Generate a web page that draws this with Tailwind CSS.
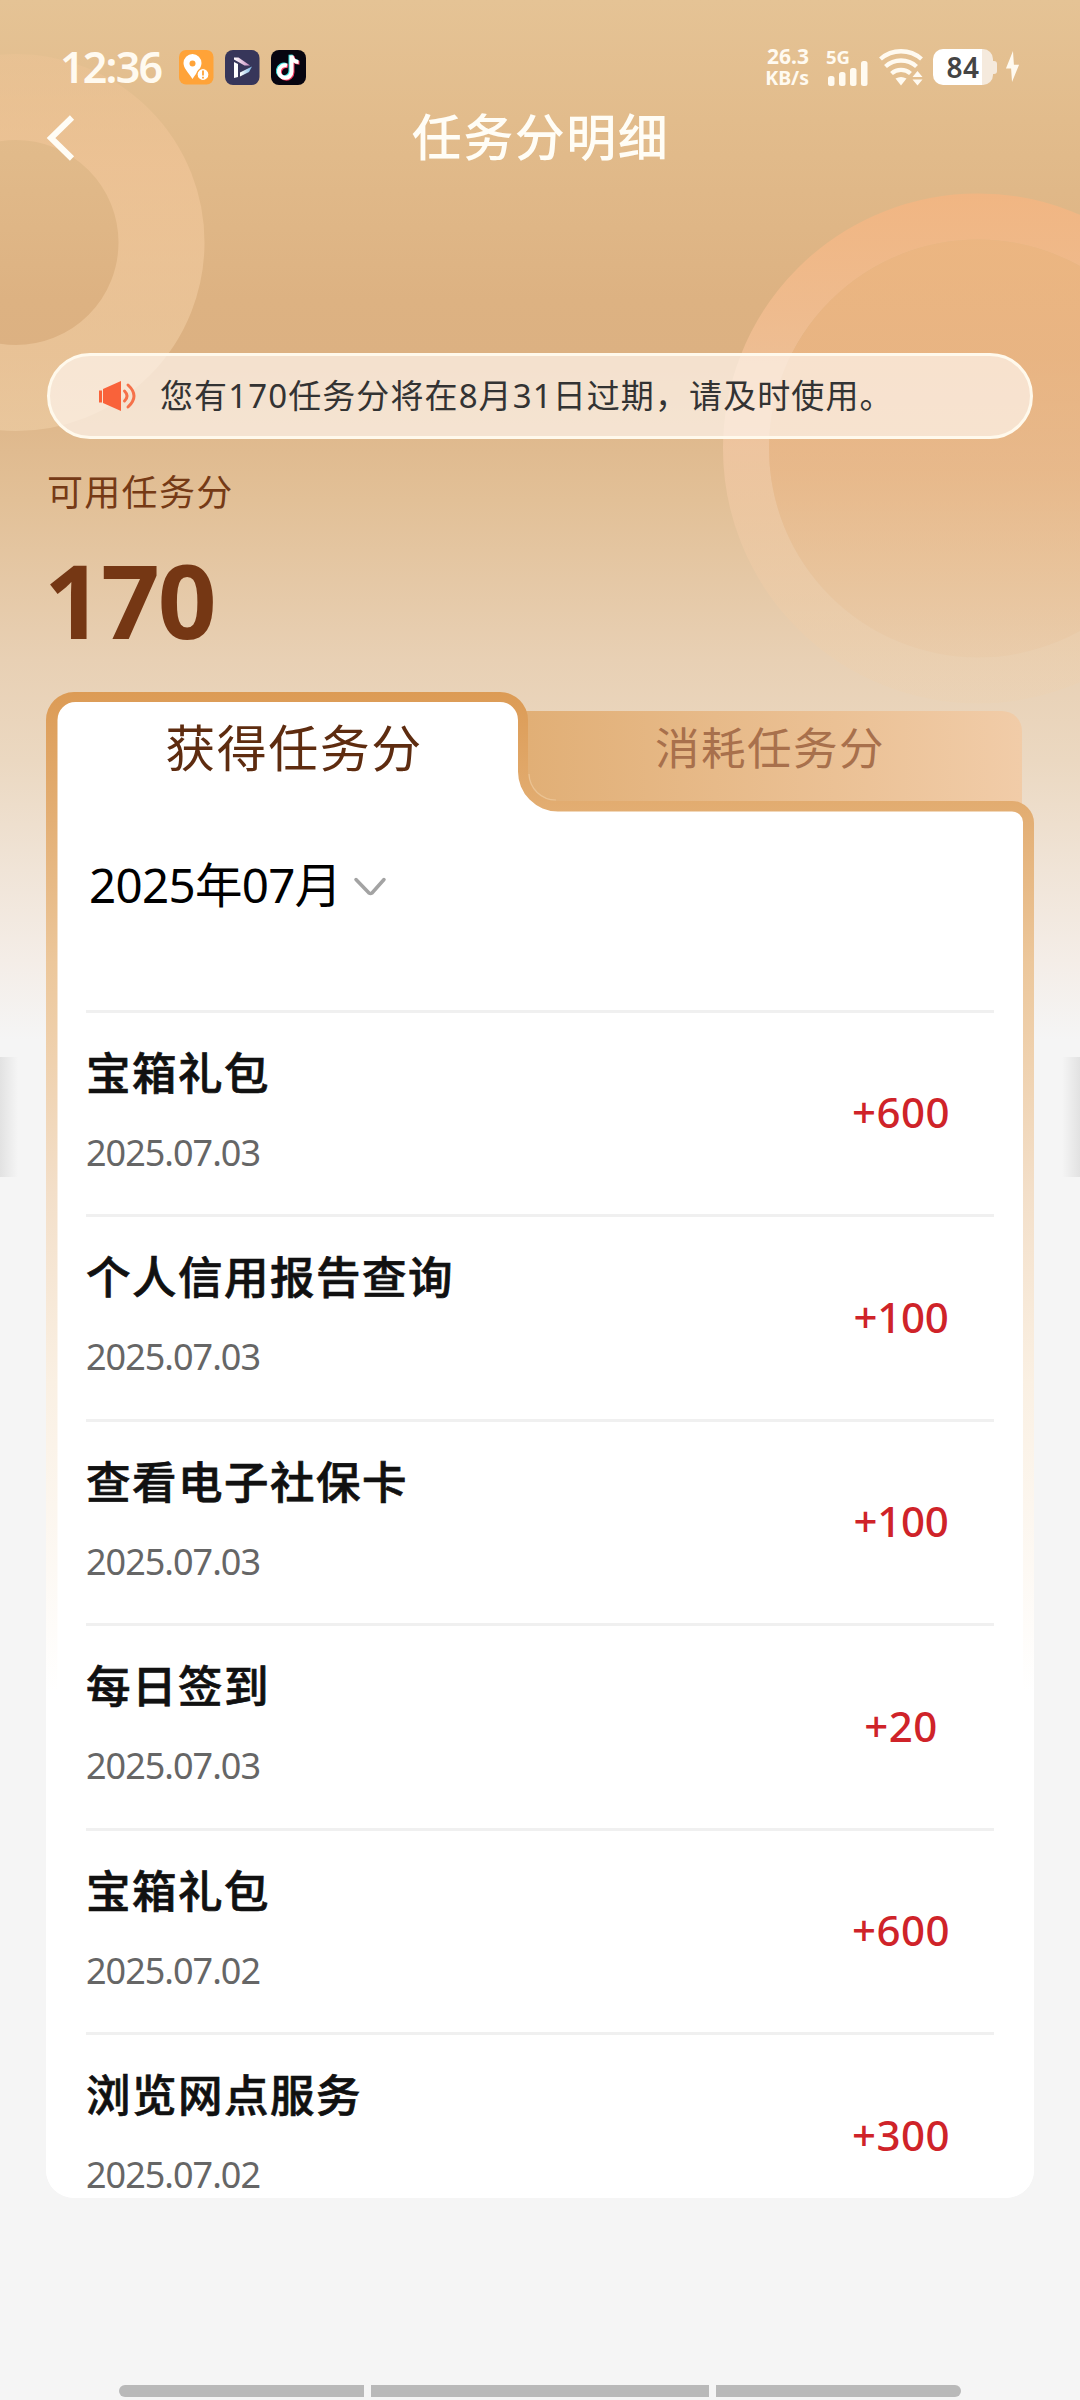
<!DOCTYPE html>
<html lang="zh-CN">
<head>
<meta charset="utf-8">
<title>任务分明细</title>
<script src="https://cdn.jsdelivr.net/npm/@tailwindcss/browser@4"></script>
</head>
<body class="bg-[#f5f5f5]">
<div class="relative flex h-[2400px] w-[1080px] flex-col overflow-hidden bg-[#f5f5f5] font-['Noto_Sans','Noto_Sans_CJK_SC',sans-serif]">

  <!-- header backdrop -->
  <div class="absolute inset-x-0 top-0 h-[1050px] bg-[linear-gradient(180deg,#e5c395_0px,#e2bc8c_120px,#ddb282_300px,#dcb182_355px,#e2c097_500px,#e8d0b4_660px,#ebd8c1_760px,#f0e4d7_870px,#f4ede7_960px,#f5f5f5_1040px)]"></div>
  <svg class="absolute left-0 top-0" width="1080" height="760" viewBox="0 0 1080 760" fill="none">
    <defs>
      <linearGradient id="ring" x1="0" y1="193" x2="0" y2="703" gradientUnits="userSpaceOnUse"><stop offset="0" stop-color="#f5b581" stop-opacity=".8"/><stop offset=".5" stop-color="#f2c8a4" stop-opacity=".75"/><stop offset="1" stop-color="#efd0aa" stop-opacity=".2"/></linearGradient>
      <linearGradient id="disc" x1="0" y1="240" x2="0" y2="658" gradientUnits="userSpaceOnUse"><stop offset="0" stop-color="#f0b680" stop-opacity=".75"/><stop offset=".55" stop-color="#ecb686" stop-opacity=".62"/><stop offset="1" stop-color="#edc59a" stop-opacity=".32"/></linearGradient>
      <linearGradient id="ringL" x1="0" y1="54" x2="0" y2="431" gradientUnits="userSpaceOnUse"><stop offset="0" stop-color="#f0c598" stop-opacity=".35"/><stop offset=".3" stop-color="#f0c598" stop-opacity=".72"/><stop offset="1" stop-color="#efcfa6" stop-opacity=".6"/></linearGradient>
    </defs>
    <circle cx="16" cy="242.500" r="145.500" stroke="url(#ringL)" stroke-width="86"/>
    <circle cx="978" cy="448.500" r="232" stroke="url(#ring)" stroke-width="46"/>
    <circle cx="978" cy="448.500" r="209" fill="url(#disc)"/>
  </svg>
  <div class="absolute left-0 top-[1057px] h-[120px] w-[18px] bg-linear-to-r from-[#e2e2e2] to-[#f5f5f5]"></div>
  <div class="absolute right-0 top-[1057px] h-[120px] w-[18px] bg-linear-to-l from-[#e2e2e2] to-[#f5f5f5]"></div>

  <!-- status bar -->
  <div class="relative flex h-[100px] items-center pl-[60px] pr-[60px] pt-[34px] text-[#fffaf0]">
    <span class="w-[119px] pb-px text-[43px] font-semibold leading-none tracking-[-1.800px]">12:36</span>
    <svg width="35" height="35" viewBox="0 0 35 35"><rect width="34.500" height="34.500" rx="7" fill="#ffa338"/><path d="M13.500 29C9 22 4.500 18 4.500 13a9 9 0 0 1 18 0c0 5-4.500 9-9 16z" fill="#fff"/><circle cx="13.500" cy="13.500" r="3" fill="#ffa338"/><circle cx="24" cy="24.500" r="6" fill="#fff" stroke="#ffa338" stroke-width="1.200"/><path d="M24 20.500v5M24 26.800v1.600" stroke="#ffa338" stroke-width="1.800"/></svg>
    <svg class="ml-[11px]" width="35" height="35" viewBox="0 0 35 35"><defs><linearGradient id="pk" x1="0" x2="1"><stop stop-color="#fff"/><stop offset="1" stop-color="#c98bc0"/></linearGradient><linearGradient id="bl" x1="0" x2="1"><stop stop-color="#fff"/><stop offset="1" stop-color="#7db9e6"/></linearGradient></defs><rect width="34.500" height="35" rx="8" fill="#37365a"/><path d="M9 12l4 2v13l-4 1z" fill="#fff"/><path d="M9 7.500h4.500L25 15.500h-5.500L9 9.500z" fill="url(#pk)"/><path d="M27 16.500l-12 6v4l9-4.500z" fill="url(#bl)"/></svg>
    <svg class="ml-[11px]" width="35" height="35" viewBox="0 0 35 35"><rect width="35" height="35" rx="8" fill="#070510"/><g fill="none" stroke-width="4"><path d="M16 15.500a6.300 6.300 0 1 0 4.500 6V5.500c.5 4 3.500 6.500 7 6.500" transform="translate(-1 -.7)" stroke="#35e0de"/><path d="M16 15.500a6.300 6.300 0 1 0 4.500 6V5.500c.5 4 3.500 6.500 7 6.500" transform="translate(1 .8)" stroke="#f5385f"/><path d="M16 15.500a6.300 6.300 0 1 0 4.500 6V5.500c.5 4 3.500 6.500 7 6.500" stroke="#fff"/></g></svg>

    <div class="ml-auto flex items-center">
      <div class="flex w-[49px] flex-col items-end text-[21px] font-bold leading-[22px]"><span>26.3</span><span class="text-[19.500px]">KB/s</span></div>
      <div class="relative ml-[15px] h-[38px] w-[45px]">
        <span class="absolute left-[2px] top-0 text-[18.500px] font-bold leading-none">5G</span>
        <svg class="absolute left-0 top-0" width="45" height="38" viewBox="0 0 45 38" fill="currentColor"><rect x="4" y="28" width="6.500" height="10" rx="2.500"/><rect x="15" y="24" width="6.500" height="14" rx="2.500"/><rect x="26" y="20" width="6.500" height="18" rx="2.500"/><rect x="37" y="13" width="6.500" height="25" rx="2.500"/></svg>
      </div>
      <svg class="ml-[10px]" width="45" height="38" viewBox="0 0 45 38" fill="none" stroke="currentColor"><path d="M1.500 11a31 31 0 0 1 41 0M6.500 18.500a23 23 0 0 1 31 0M12.500 25.500a14.500 14.500 0 0 1 19 0" stroke-width="4.300"/><path d="M16.500 30.500q5.500-3 11 0L22 37.500z" fill="currentColor" stroke="none"/><path d="M33.500 29l5-6 5 6zM33.500 31.500l5 6 5-6z" fill="currentColor" stroke="none"/></svg>
      <div class="ml-[9px] flex items-center">
        <div class="flex h-[36px] w-[60px] items-center justify-center rounded-[10px] bg-[linear-gradient(90deg,#fff_49px,#f5eadd_49px)] text-[28px] font-semibold leading-none tracking-[0.500px] text-[#444]">84</div>
        <div class="h-[13px] w-[4px] rounded-r-[3px] bg-[#f5eadd]"></div>
      </div>
      <svg class="ml-[8px]" width="15" height="36" viewBox="0 0 16 36" fill="currentColor"><path d="M8.500 1L1 19.500h5.500L7.500 34 15 15.500H9.500z"/></svg>
    </div>
  </div>

  <!-- navigation -->
  <div class="relative flex h-[76px] items-center justify-center text-[#fffdf6]">
    <svg class="absolute left-[46px] top-[14px]" width="30" height="48" viewBox="0 0 30 48" fill="none" stroke="currentColor" stroke-width="6"><path d="M26 3.500L5 24l21 20.500"/></svg>
    <h1 class="pb-[3px] pl-px text-[50px] font-medium leading-none tracking-[1.500px]">任务分明细</h1>
  </div>

  <!-- notice -->
  <div class="relative mt-[177px] ml-[47px] flex h-[86px] w-[986px] shrink-0 items-center rounded-full border-[3px] border-[#fff9ec] bg-[#fdf5ee]/70 pl-[49px]">
    <svg width="38" height="32" viewBox="0 0 38 32"><path d="M0 10.500h3v12H0zM4 9L22 1v30L4 23z" fill="#f9623a"/><path d="M25.500 11q5 5 0 10M29 5q12 11 0 22" fill="none" stroke="#f5714a" stroke-width="3" stroke-linecap="round"/></svg>
    <span class="ml-[23px] whitespace-nowrap pb-px text-[33px] leading-none tracking-[1.100px] text-[#333]">您有170任务分将在8月31日过期，请及时使用。</span>
  </div>

  <!-- balance -->
  <div class="relative mt-[29px] flex h-[50px] shrink-0 items-center pl-[47px] text-[36px] leading-none tracking-[1.300px] text-[#753a16]">可用任务分</div>
  <div class="relative mt-[31px] flex h-[100px] shrink-0 items-center pl-[44px] text-[103px] font-bold leading-none tracking-[-2px] text-[#753714]">170</div>

  <!-- card -->
  <section class="relative mt-[43px] ml-[46px] h-[1506px] w-[988px] shrink-0">
    <svg class="absolute inset-0" width="988" height="1506" viewBox="0 0 988 1506">
      <defs>
        <linearGradient id="edge" x1="0" y1="0" x2="0" y2="1000" gradientUnits="userSpaceOnUse"><stop offset="0" stop-color="#dc9b55"/><stop offset=".11" stop-color="#e2ac70"/><stop offset=".27" stop-color="#ecc79b"/><stop offset=".5" stop-color="#f3dfc9"/><stop offset=".69" stop-color="#faf0e3"/><stop offset="1" stop-color="#fff"/></linearGradient>
        <linearGradient id="tab" x1="482" y1="0" x2="976" y2="0" gradientUnits="userSpaceOnUse"><stop stop-color="#e1af76"/><stop offset="1" stop-color="#f1cca8"/></linearGradient>
      </defs>
      <path d="M470 19H956a20 20 0 0 1 20 20V125H470z" fill="url(#tab)"/>
      <path d="M0 28A28 28 0 0 1 28 0H454A28 28 0 0 1 482 28V81A28 28 0 0 0 510 109H966A22 22 0 0 1 988 131V1478A28 28 0 0 1 960 1506H28A28 28 0 0 1 0 1478z" fill="url(#edge)"/>
      <path d="M483 82A27 27 0 0 0 510 108" fill="none" stroke="#ebc393" stroke-width="1.200"/>
      <path d="M11.500 28A18 18 0 0 1 29.500 10H454A18 18 0 0 1 472 28V79A40 40 0 0 0 512 119.500H966A11 11 0 0 1 977 130V1100H11.500z" fill="#fff"/>
      <path d="M0 1000H988V1478A28 28 0 0 1 960 1506H28A28 28 0 0 1 0 1478z" fill="#fff"/>
    </svg>
    <div class="relative flex h-[118px] text-center leading-none">
      <div class="w-[496px] pt-[31px] text-[50px] tracking-[1.500px] text-[#5e2c10]">获得任务分</div>
      <div class="w-[456px] pt-[34px] text-[44.500px] tracking-[1.500px] text-[#a8704c]">消耗任务分</div>
    </div>
    <div class="relative flex h-[199.500px] items-start pl-[43px] pt-[50px] leading-none text-black">
      <span class="pt-px text-[47.500px] tracking-[-0.700px]">2025年07月</span>
      <svg class="ml-[12px] mt-[16px]" width="34" height="22" viewBox="0 0 34 22" fill="none" stroke="#a3a3a3" stroke-width="3.500" stroke-linecap="round" stroke-linejoin="round"><path d="M3 3.500l13 13.500q1.500 1 3 0l12-13.500"/></svg>
    </div>
    <ul class="relative ml-[40px] h-[1188px] w-[908px]">
      <li class="flex h-[204.500px] items-start border-t-[3px] border-[#f0f0f0]"><div class="flex-1 pt-[35px]"><h2 class="text-[44.500px] font-medium leading-[50px] tracking-[1.500px] text-[#111] [-webkit-text-stroke:0.700px_#111]">宝箱礼包</h2><p class="mt-[34px] text-[36px] leading-[42px] tracking-[-1px] text-[#666]">2025.07.03</p></div><div class="mr-[34px] flex h-[198px] w-[118px] items-center justify-center text-[42px] font-medium tracking-[0.500px] text-[#cf2329]">+600</div></li>
      <li class="flex h-[204.500px] items-start border-t-[3px] border-[#f0f0f0]"><div class="flex-1 pt-[35px]"><h2 class="text-[44.500px] font-medium leading-[50px] tracking-[1.500px] text-[#111] [-webkit-text-stroke:0.700px_#111]">个人信用报告查询</h2><p class="mt-[34px] text-[36px] leading-[42px] tracking-[-1px] text-[#666]">2025.07.03</p></div><div class="mr-[34px] flex h-[198px] w-[118px] items-center justify-center text-[42px] font-medium tracking-[-0.300px] text-[#cf2329]">+100</div></li>
      <li class="flex h-[204.500px] items-start border-t-[3px] border-[#f0f0f0]"><div class="flex-1 pt-[35px]"><h2 class="text-[44.500px] font-medium leading-[50px] tracking-[1.500px] text-[#111] [-webkit-text-stroke:0.700px_#111]">查看电子社保卡</h2><p class="mt-[34px] text-[36px] leading-[42px] tracking-[-1px] text-[#666]">2025.07.03</p></div><div class="mr-[34px] flex h-[198px] w-[118px] items-center justify-center text-[42px] font-medium tracking-[-0.300px] text-[#cf2329]">+100</div></li>
      <li class="flex h-[204.500px] items-start border-t-[3px] border-[#f0f0f0]"><div class="flex-1 pt-[35px]"><h2 class="text-[44.500px] font-medium leading-[50px] tracking-[1.500px] text-[#111] [-webkit-text-stroke:0.700px_#111]">每日签到</h2><p class="mt-[34px] text-[36px] leading-[42px] tracking-[-1px] text-[#666]">2025.07.03</p></div><div class="mr-[34px] flex h-[198px] w-[118px] items-center justify-center text-[42px] font-medium tracking-[0.500px] text-[#cf2329]">+20</div></li>
      <li class="flex h-[204.500px] items-start border-t-[3px] border-[#f0f0f0]"><div class="flex-1 pt-[35px]"><h2 class="text-[44.500px] font-medium leading-[50px] tracking-[1.500px] text-[#111] [-webkit-text-stroke:0.700px_#111]">宝箱礼包</h2><p class="mt-[34px] text-[36px] leading-[42px] tracking-[-1px] text-[#666]">2025.07.02</p></div><div class="mr-[34px] flex h-[198px] w-[118px] items-center justify-center text-[42px] font-medium tracking-[0.500px] text-[#cf2329]">+600</div></li>
      <li class="flex h-[165px] items-start border-t-[3px] border-[#f0f0f0]"><div class="flex-1 pt-[35px]"><h2 class="text-[44.500px] font-medium leading-[50px] tracking-[1.500px] text-[#111] [-webkit-text-stroke:0.700px_#111]">浏览网点服务</h2><p class="mt-[34px] text-[36px] leading-[42px] tracking-[-1px] text-[#666]">2025.07.02</p></div><div class="mr-[34px] flex h-[198px] w-[118px] items-center justify-center text-[42px] font-medium tracking-[0.500px] text-[#cf2329]">+300</div></li>
    </ul>
  </section>

  <!-- gesture bars -->
  <div class="mt-auto mb-[3px] ml-[119px] flex h-[12px] w-[842px] shrink-0 gap-[7px]">
    <div class="w-[245px] rounded-l-full bg-[#b9b9b9]"></div>
    <div class="flex-1 bg-[#b9b9b9]"></div>
    <div class="w-[245px] rounded-r-full bg-[#b9b9b9]"></div>
  </div>
</div>
</body>
</html>
